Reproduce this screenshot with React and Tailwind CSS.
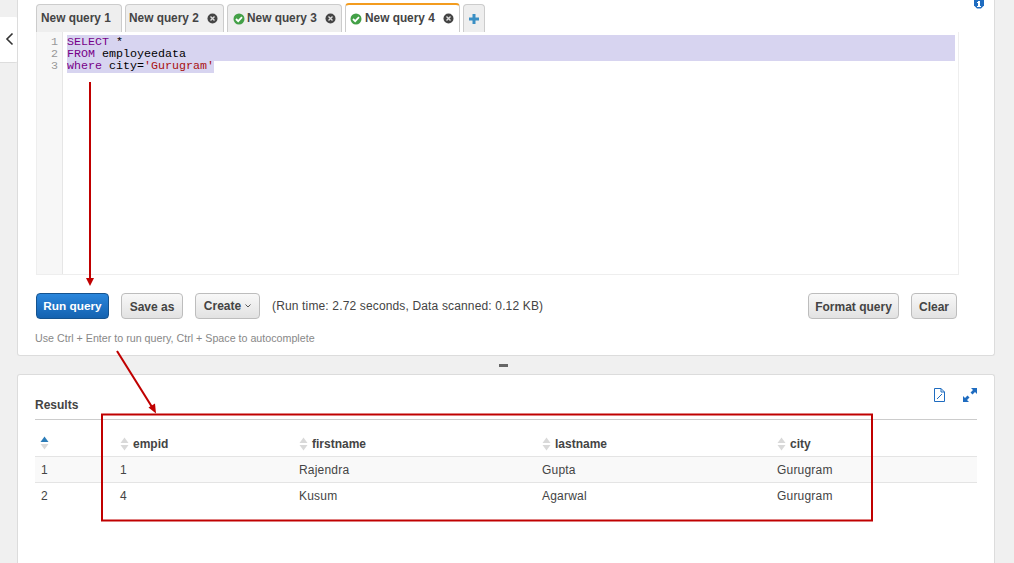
import React from "react";

const tabs = [
  { label: "New query 1", width: "w-[86px]", pad: "pl-[4px]" },
  { label: "New query 2", width: "w-[99px]", pad: "pl-[3px]", close: true },
  { label: "New query 3", width: "w-[115px]", pad: "pl-[5px]", check: true, close: true },
  { label: "New query 4", width: "w-[115px]", pad: "pl-[4px]", check: true, close: true, active: true },
];

const columns = [
  { label: "empid", width: "w-[179px]" },
  { label: "firstname", width: "w-[243px]" },
  { label: "lastname", width: "w-[235px]" },
  { label: "city", width: "w-[199px]" },
];

const rows = [
  { id: "1", cells: ["1", "Rajendra", "Gupta", "Gurugram"], striped: true },
  { id: "2", cells: ["4", "Kusum", "Agarwal", "Gurugram"] },
];

function CheckIcon() {
  return (
    <svg width="12" height="12" viewBox="0 0 12 12" className="shrink-0">
      <circle cx="6" cy="6" r="5.5" fill="#43a047" />
      <path d="M3 6l2.2 2.2L9 4.2" fill="none" stroke="#fff" strokeWidth="1.8" />
    </svg>
  );
}

function CloseIcon() {
  return (
    <svg width="11" height="11" viewBox="0 0 11 11" className="shrink-0">
      <circle cx="5.5" cy="5.5" r="5" fill="#444" />
      <path d="M3.5 3.5l4 4M7.5 3.5l-4 4" stroke="#ddd" strokeWidth="1.4" />
    </svg>
  );
}

function SortIcon({ active }) {
  return (
    <svg width="9" height="14" viewBox="0 0 9 14" className="shrink-0">
      <path d="M4.5 0.5L8.5 6H0.5z" fill={active ? "#2b7cb8" : "#d9d9d9"} />
      <path d="M4.5 13.5L8.5 8H0.5z" fill="#d9d9d9" />
    </svg>
  );
}

function GreyButton({ children, className = "" }) {
  return (
    <button
      type="button"
      className={`h-[26px] rounded-[4px] border border-[#bdbdbd] bg-gradient-to-b from-[#f8f8f8] to-[#e2e2e2] text-[12px] font-bold text-[#444] ${className}`}
    >
      {children}
    </button>
  );
}

function Annotations() {
  return (
    <svg className="absolute left-0 top-0 pointer-events-none" width="1014" height="563">
      <path d="M90 82V279" stroke="#c00000" strokeWidth="2" fill="none" />
      <path d="M86 278h8l-4 8z" fill="#c00000" />
      <path d="M117 351L152 407" stroke="#c00000" strokeWidth="2" fill="none" />
      <path d="M148.500 407.500l6.500-4 1 10z" fill="#c00000" />
      <rect x="102" y="414.500" width="770" height="106" fill="none" stroke="#c00000" strokeWidth="2" />
    </svg>
  );
}

export default function App() {
  return (
    <div className="relative flex h-[563px] w-[1014px] overflow-hidden bg-[#f0f0f0] font-['Liberation_Sans',Arial,sans-serif]">
      <div className="w-[17px] shrink-0 pt-[17px]">
        <div className="flex h-[46px] w-[18px] items-center justify-center rounded-r-[3px] border-b border-[#ddd] bg-white pb-[2px]">
          <svg width="9" height="14" viewBox="0 0 9 14">
            <path d="M7.500 1.500L2 7l5.500 5.500" fill="none" stroke="#333" strokeWidth="1.6" />
          </svg>
        </div>
      </div>

      <div className="w-[978px] shrink-0">
        <section className="relative h-[356px] rounded-b-[3px] border-x border-b border-[#dcdcdc] bg-white pl-[18px] pr-[35px] pt-[3px]">
          <svg width="10" height="9" viewBox="0 0 10 9" className="absolute right-[10px] top-0">
            <path d="M0 0h10v5.500L7 8.500H3L0 5.500z" fill="#1f6cc0" />
            <path d="M4 1h2v5h1v1H3V6h1V3H3V2h1z" fill="#fff" />
          </svg>

          <div className="flex h-[29px] items-end gap-[3px]">
            {tabs.map((tab) => (
              <div
                key={tab.label}
                className={`flex items-center rounded-t-[4px] border border-b-0 text-[11.850px] font-bold text-[#444] ${tab.pad} ${tab.width} ${
                  tab.active
                    ? "h-[29px] border-[#ccc] border-t-2 border-t-[#f39c1f] bg-white"
                    : "h-[28px] border-[#ccc] bg-[#eeeeee]"
                }`}
              >
                {tab.check ? <CheckIcon /> : null}
                <span className={`whitespace-nowrap ${tab.check ? (tab.active ? "ml-[3px]" : "ml-[2px]") : ""}`}>
                  {tab.label}
                </span>
                {tab.close ? (
                  <span className="ml-auto pr-[5px]">
                    <CloseIcon />
                  </span>
                ) : null}
              </div>
            ))}
            <div className="flex h-[28px] w-[22px] items-center justify-center rounded-t-[4px] border border-b-0 border-[#ccc] bg-[#eeeeee]">
              <svg width="10" height="10" viewBox="0 0 10 10">
                <path d="M5 0v10M0 5h10" stroke="#3a8fc4" strokeWidth="3" />
              </svg>
            </div>
          </div>

          <div className="flex h-[243px] w-[923px] border border-t-0 border-[#eeeeee] font-['Liberation_Mono',monospace] text-[11.670px] leading-[14px]">
            <div className="w-[26px] shrink-0 border-r border-[#e6e6e6] bg-[#f7f7f7] pt-[3px] pr-[4px] text-right text-[#999]">
              <div className="-mb-[2px]">1</div>
              <div className="-mb-[2px]">2</div>
              <div>3</div>
            </div>
            <div className="w-[892px] whitespace-pre pl-[4px] pt-[3px] text-black">
              <div className="-mb-[2px] bg-[#d7d4f0]">
                <span className="text-[#770088]">SELECT</span> *
              </div>
              <div className="-mb-[2px] bg-[#d7d4f0]">
                <span className="text-[#770088]">FROM</span> employeedata
              </div>
              <div className="w-fit bg-[#d7d4f0]">
                <span className="text-[#770088]">where</span> city=<span className="text-[#aa1111]">'Gurugram'</span>
              </div>
            </div>
          </div>

          <div className="mt-[18px] flex h-[26px] w-[921px] items-center">
            <button
              type="button"
              className="h-[26px] w-[73px] rounded-[4px] border border-[#15538f] bg-gradient-to-b from-[#2a86dc] to-[#1462b0] pt-[1px] text-[11.800px] font-bold text-white"
            >
              Run query
            </button>
            <GreyButton className="ml-[12px] w-[62px] pt-[1px]">Save as</GreyButton>
            <GreyButton className="ml-[12px] flex w-[65px] items-center justify-center gap-[4px]">
              Create
              <svg width="6" height="4" viewBox="0 0 6 4">
                <path d="M0.500 0.500L3 3l2.500-2.500" fill="none" stroke="#555" />
              </svg>
            </GreyButton>
            <span className="ml-[12px] text-[12px] tracking-[0.15px] text-[#444]">
              (Run time: 2.72 seconds, Data scanned: 0.12 KB)
            </span>
            <GreyButton className="ml-auto w-[91px] pt-[1px]">Format query</GreyButton>
            <GreyButton className="ml-[12px] w-[46px] pt-[1px]">Clear</GreyButton>
          </div>

          <p className="ml-[-1px] mt-[11px] text-[10.700px] text-[#888]">
            Use Ctrl + Enter to run query, Ctrl + Space to autocomplete
          </p>
        </section>

        <div className="flex h-[18px] items-center justify-center">
          <div className="mr-[5px] h-[3px] w-[9px] bg-[#666]" />
        </div>

        <section className="relative h-[189px] rounded-t-[3px] border-x border-t border-[#dcdcdc] bg-white px-[17px]">
          <div className="flex h-[45px] items-end justify-between border-b border-[#ccc] pb-[7px]">
            <h2 className="mb-[-2px] text-[12px] font-bold text-[#444]">Results</h2>
            <div className="mb-[10px] flex items-center gap-[18px]">
              <svg width="11" height="14" viewBox="0 0 11 14">
                <path d="M0.500 0.500H7L10.500 4v9.500H0.500z" fill="#fff" stroke="#1f6cc0" />
                <path d="M7 0.500V4h3.500M3 11l5-5" fill="none" stroke="#1f6cc0" />
              </svg>
              <svg width="14" height="14" viewBox="0 0 14 14">
                <path d="M8 0h6v6l-2-2-2.500 2.500-2-2L10 2zM0 14V8l2 2 2.500-2.500 2 2L4 12l2 2z" fill="#1f6cc0" />
              </svg>
            </div>
          </div>

          <div className="flex h-[37px] items-center border-b border-[#e4e4e4] pt-[11px] text-[12px] font-bold text-[#444]">
            <div className="w-[85px] shrink-0 pb-[2px] pl-[5px]">
              <SortIcon active />
            </div>
            {columns.map((col) => (
              <div key={col.label} className={`flex shrink-0 items-center gap-[4px] ${col.width}`}>
                <SortIcon />
                {col.label}
              </div>
            ))}
          </div>

          {rows.map((row) => (
            <div
              key={row.id}
              className={`flex h-[26px] items-center border-b text-[12px] tracking-[0.2px] text-[#444] ${
                row.striped ? "border-[#e4e4e4] bg-[#f9f9f9]" : "border-transparent"
              }`}
            >
              <div className="w-[85px] shrink-0 pl-[6px]">{row.id}</div>
              {row.cells.map((cell, i) => (
                <div key={columns[i].label} className={`shrink-0 ${columns[i].width}`}>
                  {cell}
                </div>
              ))}
            </div>
          ))}
        </section>
      </div>

      <Annotations />
    </div>
  );
}
